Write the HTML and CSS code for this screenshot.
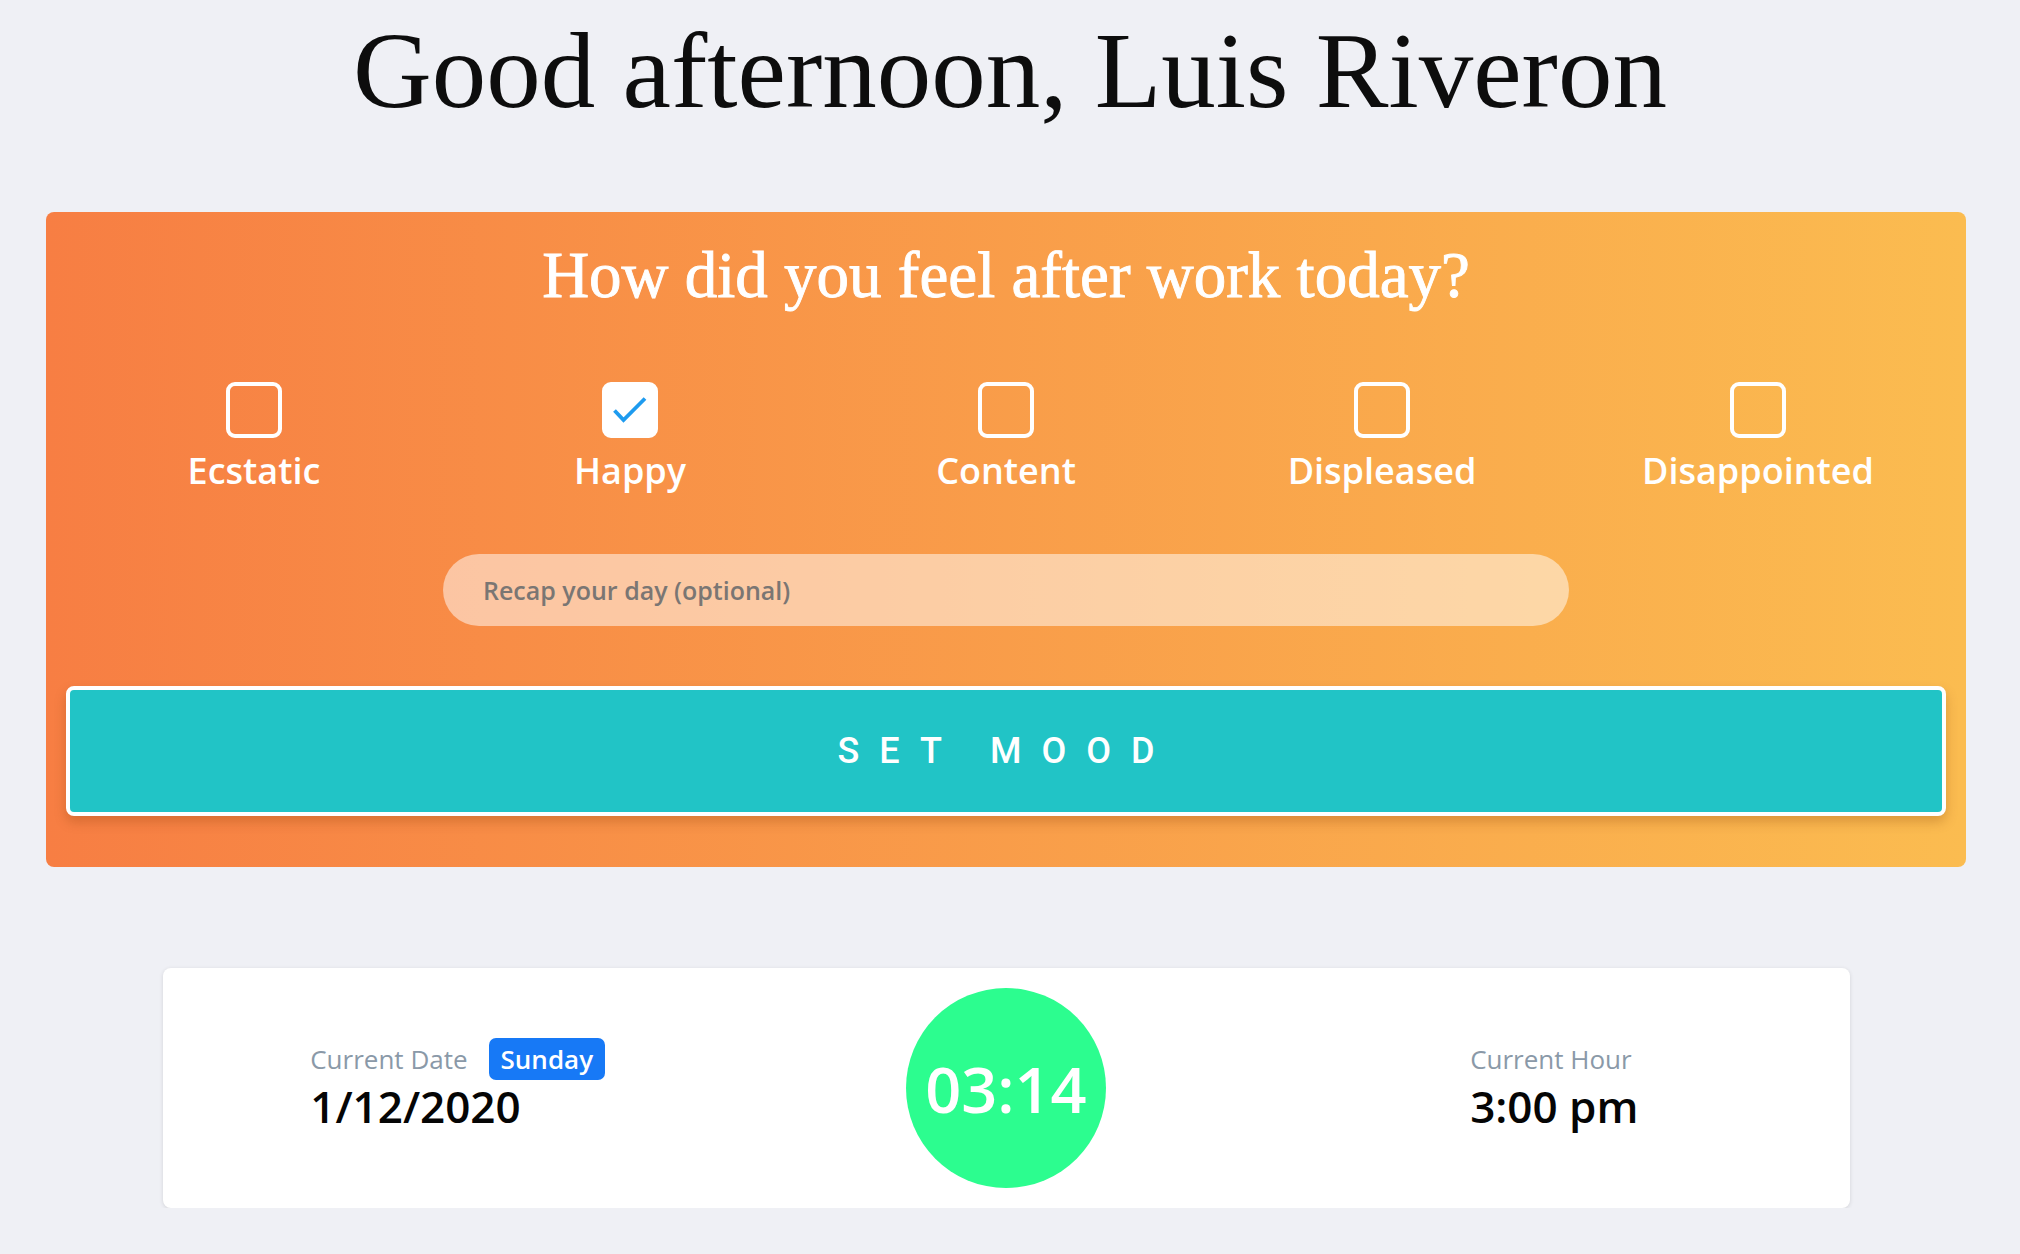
FILE: index.html
```html
<!DOCTYPE html>
<html lang="en">
<head>
<meta charset="utf-8">
<title>Mood</title>
<link rel="stylesheet" href="styles.css">
</head>
<body>
<h1 class="greeting">Good afternoon, Luis Riveron</h1>
<main class="container">
  <section class="mood-card">
    <h2 class="mood-title">How did you feel after work today?</h2>
    <div class="options">
      <label class="option"><span class="box"></span><span class="option-label">Ecstatic</span></label>
      <label class="option"><span class="box checked"><svg viewBox="4 4 48 48" width="48" height="48"><path d="M12.5 28.5 L21.5 38 L43 16.5" fill="none" stroke="#1e9bef" stroke-width="3.8" stroke-linecap="butt" stroke-linejoin="miter"/></svg></span><span class="option-label">Happy</span></label>
      <label class="option"><span class="box"></span><span class="option-label">Content</span></label>
      <label class="option"><span class="box"></span><span class="option-label">Displeased</span></label>
      <label class="option"><span class="box"></span><span class="option-label">Disappointed</span></label>
    </div>
    <input class="recap" type="text" placeholder="Recap your day (optional)">
    <button class="set-btn" type="button">SET MOOD</button>
  </section>
  <section class="info-card">
    <div class="info">
      <div class="info-head"><span class="info-label">Current Date</span><span class="badge">Sunday</span></div>
      <div class="info-value">1/12/2020</div>
    </div>
    <div class="clock"><span>03:14</span></div>
    <div class="info">
      <div class="info-head"><span class="info-label">Current Hour</span></div>
      <div class="info-value">3:00 pm</div>
    </div>
  </section>
</main>
</body>
</html>
```

FILE: styles.css
```css
* { box-sizing: border-box; }
html, body { background: #eff0f5; }
body {
  margin: 8px;
  font-family: "Open Sans", "Noto Sans", sans-serif;
}
.greeting {
  margin: 0;
  text-align: center;
  font-family: "Liberation Serif", serif;
  font-weight: 400;
  font-size: 109px;
  line-height: 125px;
  color: #0d0d0d;
}
.container {
  width: 1920px;
  margin-left: 38px;
  margin-top: 79px;
}
.mood-card {
  background: linear-gradient(to right, #f77e43, #fbbc50);
  border-radius: 8px;
  padding: 20px;
  display: flex;
  flex-direction: column;
  align-items: center;
}
.mood-title {
  margin: 3px 0 0;
  font-family: "Liberation Serif", serif;
  font-weight: 400;
  font-size: 65px;
  line-height: 80px;
  color: #fff;
  letter-spacing: 0;
  -webkit-text-stroke: 0.9px #fff;
}
.options {
  margin-top: 67px;
  width: 100%;
  display: grid;
  grid-template-columns: repeat(5, 1fr);
}
.option {
  display: flex;
  flex-direction: column;
  align-items: center;
  gap: 11px;
}
.box {
  width: 56px;
  height: 56px;
  border: 4px solid #fff;
  border-radius: 9px;
  display: flex;
  align-items: center;
  justify-content: center;
}
.box.checked { background: #fff; }
.box svg { display: block; flex: none; }
.option-label {
  font-size: 36px;
  line-height: 44px;
  font-weight: 600;
  color: #fff;
}
.recap {
  margin-top: 61px;
  width: 1126px;
  height: 72px;
  border: none;
  border-radius: 36px;
  background: rgba(255,255,255,0.5);
  padding: 0 40px;
  font-family: "Open Sans", sans-serif;
  font-size: 25px;
  font-weight: 600;
  color: #555;
  outline: none;
}
.recap::placeholder { color: #7a7673; }
.set-btn {
  margin-top: 60px;
  margin-bottom: 31px;
  width: 100%;
  height: 130px;
  background: #21c4c6;
  border: 4px solid #fff;
  border-radius: 8px;
  box-shadow: 0 6px 12px rgba(120,50,0,0.25);
  color: #fff;
  font-family: "Roboto", sans-serif;
  font-weight: 500;
  font-size: 36px;
  letter-spacing: 20px;
  padding: 0;
  display: flex;
  align-items: center;
  justify-content: center;
}
.info-card {
  margin: 101px auto 0;
  width: 1687px;
  height: 240px;
  background: #fff;
  border-radius: 8px;
  box-shadow: 0 1px 4px rgba(0,0,0,0.12);
  padding: 20px 21px;
  display: grid;
  grid-template-columns: repeat(3, 1fr);
  justify-items: center;
  align-items: center;
}
.info {
  padding-bottom: 7px;
}
.info-head {
  display: flex;
  align-items: center;
  gap: 21px;
  min-height: 42px;
}
.info-label {
  font-size: 26px;
  font-weight: 400;
  color: #8a99a8;
}
.badge {
  background: #1779f6;
  color: #fff;
  border-radius: 7px;
  height: 42px;
  padding: 0 12px;
  font-size: 26px;
  font-weight: 600;
  display: flex;
  align-items: center;
}
.info-value {
  margin-top: 1px;
  font-size: 44px;
  line-height: 50px;
  font-weight: 600;
  color: #050505;
}
.clock {
  width: 200px;
  height: 200px;
  border-radius: 50%;
  background: #2cfd8f;
  display: flex;
  align-items: center;
  justify-content: center;
  color: #fff;
  font-size: 63px;
  font-weight: 600;
}
```
